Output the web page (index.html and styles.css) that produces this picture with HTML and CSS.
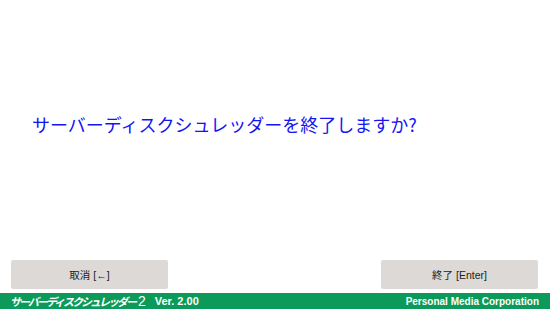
FILE: index.html
```html
<!DOCTYPE html>
<html lang="ja">
<head>
    <meta charset="UTF-8">
    <title>サーバーディスクシュレッダー2</title>
    <link rel="stylesheet" href="styles.css">
</head>
<body>
    <div class="screen">
        <div class="message">
            <p>サーバーディスクシュレッダーを終了しますか?</p>
        </div>

        <div class="actions">
            <button class="btn">取消 [←]</button>
            <button class="btn">終了 [Enter]</button>
        </div>

        <div class="footer">
            <div class="product">
                <span class="product-name">サーバーディスクシュレッダー</span><span class="product-num">2</span>
                <span class="version">Ver. 2.00</span>
            </div>
            <div class="company">Personal Media Corporation</div>
        </div>
    </div>
</body>
</html>
```

FILE: styles.css
```css
body {
    margin: 0;
    padding: 0;
    background-color: #fff;
    font-family: "Liberation Sans", "Noto Sans CJK JP", sans-serif;
}

.screen {
    width: 550px;
    height: 309px;
    display: flex;
    flex-direction: column;
    overflow: hidden;
}

.message {
    flex: 1;
}

.message p {
    margin: 0;
    padding: 111px 0 0 32px;
    font-family: "Noto Sans CJK JP", sans-serif;
    font-size: 18px;
    line-height: 26px;
    color: #1414f4;
}

.actions {
    display: flex;
    justify-content: space-between;
    padding: 0 12px 0 11px;
    margin-bottom: 4px;
}

.btn {
    width: 157px;
    height: 29px;
    border: none;
    border-radius: 2px;
    background-color: #dcd9d6;
    color: #222;
    font-family: "Liberation Sans", "Noto Sans CJK JP", sans-serif;
    font-size: 10.5px;
    padding: 0;
}

.footer {
    height: 16px;
    background-color: #0b9a59;
    color: #fff;
    display: flex;
    justify-content: space-between;
    align-items: center;
    padding: 0 11px 0 10px;
    font-weight: bold;
}

.product {
    display: flex;
    align-items: center;
    white-space: nowrap;
}

.product-name {
    font-family: "Noto Sans CJK JP", sans-serif;
    font-style: italic;
    font-size: 11px;
    line-height: 14px;
    letter-spacing: -2px;
}

.product-num {
    font-family: "Liberation Sans", sans-serif;
    font-weight: normal;
    font-size: 14px;
    line-height: 16px;
    margin-left: 3px;
}

.version {
    font-size: 11px;
    margin-left: 9px;
}

.company {
    font-size: 10px;
    white-space: nowrap;
}
```
